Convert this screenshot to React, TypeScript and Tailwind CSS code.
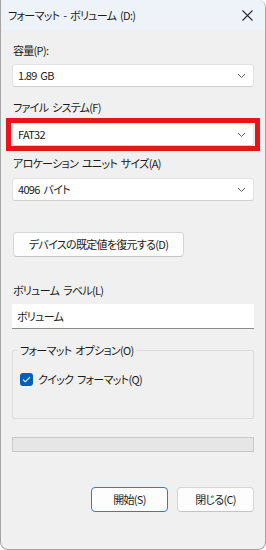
const font = {
  fontFamily: '"Noto Sans CJK JP", "Noto Sans", sans-serif',
  fontFeatureSettings: '"palt" 1',
};

function Chevron() {
  return (
    <svg width="9" height="6" viewBox="0 0 9 6" className="shrink-0">
      <path d="M1 1 L4.5 4.5 L8 1" fill="none" stroke="#5f5f5f" strokeWidth="1" />
    </svg>
  );
}

function Dropdown({ value }: { value: string }) {
  return (
    <div className="flex h-[23px] items-center justify-between rounded-[3px] border border-[#e2e2e2] border-b-[#d0d0d0] bg-white pl-[5px] pr-[7px]">
      <span className="text-[#1b1b1b]">{value}</span>
      <Chevron />
    </div>
  );
}

function Label({ children }: { children: React.ReactNode }) {
  return <div className="h-4 whitespace-nowrap leading-4 text-[#1b1b1b]">{children}</div>;
}

export default function App() {
  return (
    <div
      className="flex h-[550px] w-[266px] flex-col overflow-hidden rounded-tr-[8px] rounded-b-[8px] border-x border-b border-[#a5a5a5] bg-[#f0f0f0] text-[11px] tracking-[-0.7px] [word-spacing:2px]"
      style={font}
    >
      {/* Title bar */}
      <div className="flex h-[30px] shrink-0 items-center justify-between bg-[#eef3f9] pl-[7px] pr-[12px]">
        <span className="text-[#1b1b1b]">フォーマット - ボリューム (D:)</span>
        <svg width="11" height="11" viewBox="0 0 11 11">
          <path d="M0.5 0.5 L10.5 10.5 M10.5 0.5 L0.5 10.5" stroke="#2b2b2b" strokeWidth="1.1" />
        </svg>
      </div>

      <div className="flex flex-col px-[11px]">
        <div className="mt-[12px] pl-[1px]">
          <Label>容量(P):</Label>
        </div>
        <div className="mt-[6px]">
          <Dropdown value="1.89 GB" />
        </div>

        <div className="mt-[12px] pl-[1px]">
          <Label>ファイル システム(F)</Label>
        </div>
        <div className="-mx-[6px] mt-[3px] border-[5px] border-[#e8141c] px-[1px]">
          <Dropdown value="FAT32" />
        </div>

        <div className="mt-[4px] pl-[1px]">
          <Label>アロケーション ユニット サイズ(A)</Label>
        </div>
        <div className="mt-[7px]">
          <Dropdown value="4096 バイト" />
        </div>

        <div className="mt-[31px] flex">
          <button className="ml-[1px] h-[25px] w-[171px] whitespace-nowrap rounded-[4px] border border-[#d5d5d5] border-b-[#c4c4c4] bg-[#fdfdfd] text-[#1b1b1b]">
            デバイスの既定値を復元する(D)
          </button>
        </div>

        <div className="mt-[25px] pl-[1px]">
          <Label>ボリューム ラベル(L)</Label>
        </div>
        <div className="mt-[6px] flex h-[25px] items-center border-b border-[#8a8a8a] bg-white pl-[5px] text-[#1b1b1b]">
          ボリューム
        </div>

        <div className="relative mt-[21px] h-[69px] rounded-[2px] border border-[#dcdcdc]">
          <span className="absolute -top-[9px] left-[5px] whitespace-nowrap bg-[#f0f0f0] px-[2px] leading-4 text-[#1b1b1b]">
            フォーマット オプション(O)
          </span>
          <div className="mt-[20px] ml-[7px] flex items-center gap-[5px]">
            <div className="flex h-[13px] w-[13px] items-center justify-center rounded-[3px] bg-[#005fb8]">
              <svg width="9" height="7" viewBox="0 0 9 7">
                <path d="M1 3.6 L3.3 5.8 L8 1.2" fill="none" stroke="white" strokeWidth="1.1" />
              </svg>
            </div>
            <span className="whitespace-nowrap leading-4 text-[#1b1b1b]">クイック フォーマット(Q)</span>
          </div>
        </div>

        <div className="mt-[18px] h-[15px] border border-[#c8c8c8] bg-[#e6e6e6]" />

        <div className="mt-[35px] flex justify-end gap-[9px]">
          <button className="h-[25px] w-[77px] rounded-[4px] border border-[#2c7fd0] bg-[#fdfdfd] text-[#1b1b1b]">
            開始(S)
          </button>
          <button className="h-[25px] w-[77px] rounded-[4px] border border-[#d5d5d5] border-b-[#c4c4c4] bg-[#fdfdfd] text-[#1b1b1b]">
            閉じる(C)
          </button>
        </div>
      </div>
    </div>
  );
}
